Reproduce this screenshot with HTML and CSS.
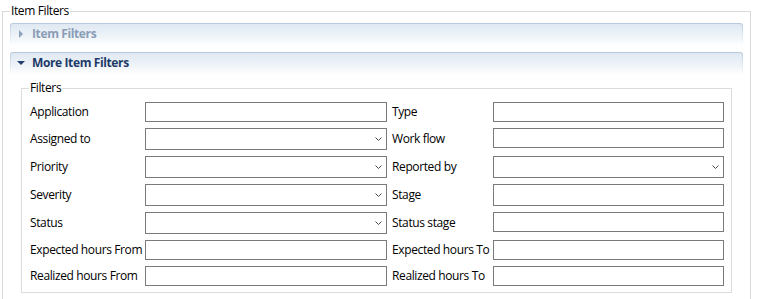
FILE: index.html
```html
<!DOCTYPE html>
<html lang="en">
<head>
<meta charset="utf-8">
<title>Item Filters</title>
<link rel="stylesheet" href="styles.css">
</head>
<body>
<fieldset class="group">
  <legend class="group-title">Item Filters</legend>
  <div class="section">
    <div class="section-bar">
      <div class="section-head collapsed">
        <svg class="twisty" width="8" height="8" viewBox="0 0 8 8"><polygon points="2,0 6,4 2,8" /></svg>
        <span>Item Filters</span>
      </div>
    </div>
  </div>
  <div class="section">
    <div class="section-bar">
      <div class="section-head expanded">
        <svg class="twisty" width="8" height="8" viewBox="0 0 8 8"><polygon points="0,2 8,2 4,6" /></svg>
        <span>More Item Filters</span>
      </div>
    </div>
    <fieldset class="filters">
      <legend class="filters-title">Filters</legend>
      <div class="grid">
        <label class="lbl">Application</label>
        <div class="field"></div>
        <label class="lbl lbl2">Type</label>
        <div class="field"></div>

        <label class="lbl">Assigned to</label>
        <div class="field combo"><svg width="7" height="4" viewBox="0 0 7 4"><polyline points="0.5,0.5 3.5,3.5 6.5,0.5"/></svg></div>
        <label class="lbl lbl2">Work flow</label>
        <div class="field short"></div>

        <label class="lbl">Priority</label>
        <div class="field combo"><svg width="7" height="4" viewBox="0 0 7 4"><polyline points="0.5,0.5 3.5,3.5 6.5,0.5"/></svg></div>
        <label class="lbl lbl2">Reported by</label>
        <div class="field combo"><svg width="7" height="4" viewBox="0 0 7 4"><polyline points="0.5,0.5 3.5,3.5 6.5,0.5"/></svg></div>

        <label class="lbl">Severity</label>
        <div class="field combo"><svg width="7" height="4" viewBox="0 0 7 4"><polyline points="0.5,0.5 3.5,3.5 6.5,0.5"/></svg></div>
        <label class="lbl lbl2">Stage</label>
        <div class="field"></div>

        <label class="lbl">Status</label>
        <div class="field combo"><svg width="7" height="4" viewBox="0 0 7 4"><polyline points="0.5,0.5 3.5,3.5 6.5,0.5"/></svg></div>
        <label class="lbl lbl2">Status stage</label>
        <div class="field short"></div>

        <label class="lbl">Expected hours From</label>
        <div class="field"></div>
        <label class="lbl lbl2">Expected hours To</label>
        <div class="field"></div>

        <label class="lbl">Realized hours From</label>
        <div class="field"></div>
        <label class="lbl lbl2">Realized hours To</label>
        <div class="field"></div>
      </div>
    </fieldset>
  </div>
</fieldset>
</body>
</html>
```
FILE: styles.css
```css
html, body {
  margin: 0;
  padding: 0;
  background: #ffffff;
  overflow: hidden;
}

body {
  font-family: "Open Sans", "Noto Sans", sans-serif;
  font-size: 12px;
  letter-spacing: -0.38px;
  color: #000000;
  width: 763px;
  height: 299px;
}

.group {
  margin: 3px 12px 0 2px;
  padding: 4px 7px 16px 7px;
  border: 1px solid #d9d9d9;
  min-width: 0;
}

.group-title {
  padding: 0 1px;
  line-height: 16px;
  height: 16px;
}

.section + .section {
  margin-top: 6px;
}

.section-bar {
  padding: 1px 1px 0 1px;
  border-radius: 3px 3px 0 0;
  background: linear-gradient(#b6c9dd 0%, #d3e0ec 40%, #ffffff 100%);
}

.section-head {
  height: 22px;
  border-radius: 2px 2px 0 0;
  background: linear-gradient(#dfe8f2 0%, #eef3f8 55%, #ffffff 100%);
  display: flex;
  align-items: center;
  padding-left: 6px;
  padding-bottom: 2px;
  box-sizing: border-box;
  font-weight: bold;
  line-height: 16px;
}

.section-head .twisty {
  width: 8px;
  height: 8px;
  margin-right: 7px;
  flex: none;
}

.section-head.collapsed {
  color: #8a9db6;
}

.section-head.collapsed .twisty {
  fill: #8da2bc;
}

.section-head.expanded {
  color: #1d3a68;
}

.section-head.expanded .twisty {
  fill: #24406d;
}

.filters {
  margin: 5px 11px 0 11px;
  padding: 6px 7px 6px 8px;
  border: 1px solid #dcdcdc;
  min-width: 0;
}

.filters-title {
  margin-left: -1px;
  padding: 0 1px;
  line-height: 16px;
  height: 16px;
}

.grid {
  display: grid;
  grid-template-columns: 115px 242px 106px 231px;
  grid-template-rows: 20px 22px 22px 22px 22px 20px 20px;
  row-gap: 6px;
}

.lbl {
  display: flex;
  align-items: center;
  white-space: nowrap;
  line-height: 16px;
}

.lbl2 {
  padding-left: 5px;
}

.field {
  box-sizing: border-box;
  border: 1px solid #7a7a7a;
  background: #ffffff;
  height: 100%;
}

.field.short {
  height: 20px;
}

.combo {
  display: flex;
  align-items: center;
  justify-content: flex-end;
  padding-right: 4px;
}

.combo svg {
  fill: none;
  stroke: #4a4a4a;
  stroke-width: 1;
}
```
